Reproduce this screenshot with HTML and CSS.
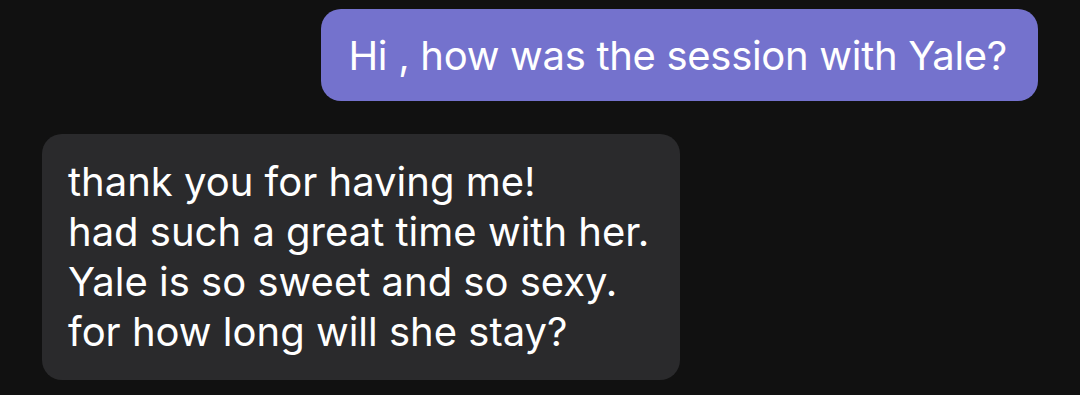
FILE: index.html
```html
<!DOCTYPE html>
<html>
<head>
<meta charset="utf-8">
<link rel="stylesheet" href="styles.css">
</head>
<body>
<div class="chat">
  <div class="row row-out">
    <div class="bubble bubble-out">Hi , how was the session with Yale?</div>
  </div>
  <div class="row row-in">
    <div class="bubble bubble-in">thank you for having me!<br>had such a great time with her.<br>Yale is so sweet and so sexy.<br>for how long will she stay?</div>
  </div>
</div>
</body>
</html>
```

FILE: styles.css
```css
html, body {
  margin: 0;
  padding: 0;
  background: #111111;
  width: 1080px;
  height: 395px;
  overflow: hidden;
}
.chat {
  display: flex;
  flex-direction: column;
  gap: 33px;
  padding: 9px 42px 0 42px;
  font-family: Inter, Roboto, "Liberation Sans", sans-serif;
  font-size: 40px;
  line-height: 50px;
  color: #ffffff;
}
.row {
  display: flex;
}
.row-out {
  justify-content: flex-end;
}
.row-in {
  justify-content: flex-start;
}
.bubble {
  border-radius: 20px;
  padding: 22px 31px 20px 27px;
}
.bubble-out {
  background: #7472cd;
  letter-spacing: -0.3px;
}
.bubble-in {
  background: #2a2a2c;
  padding: 23px 31px 23px 26px;
}
```
